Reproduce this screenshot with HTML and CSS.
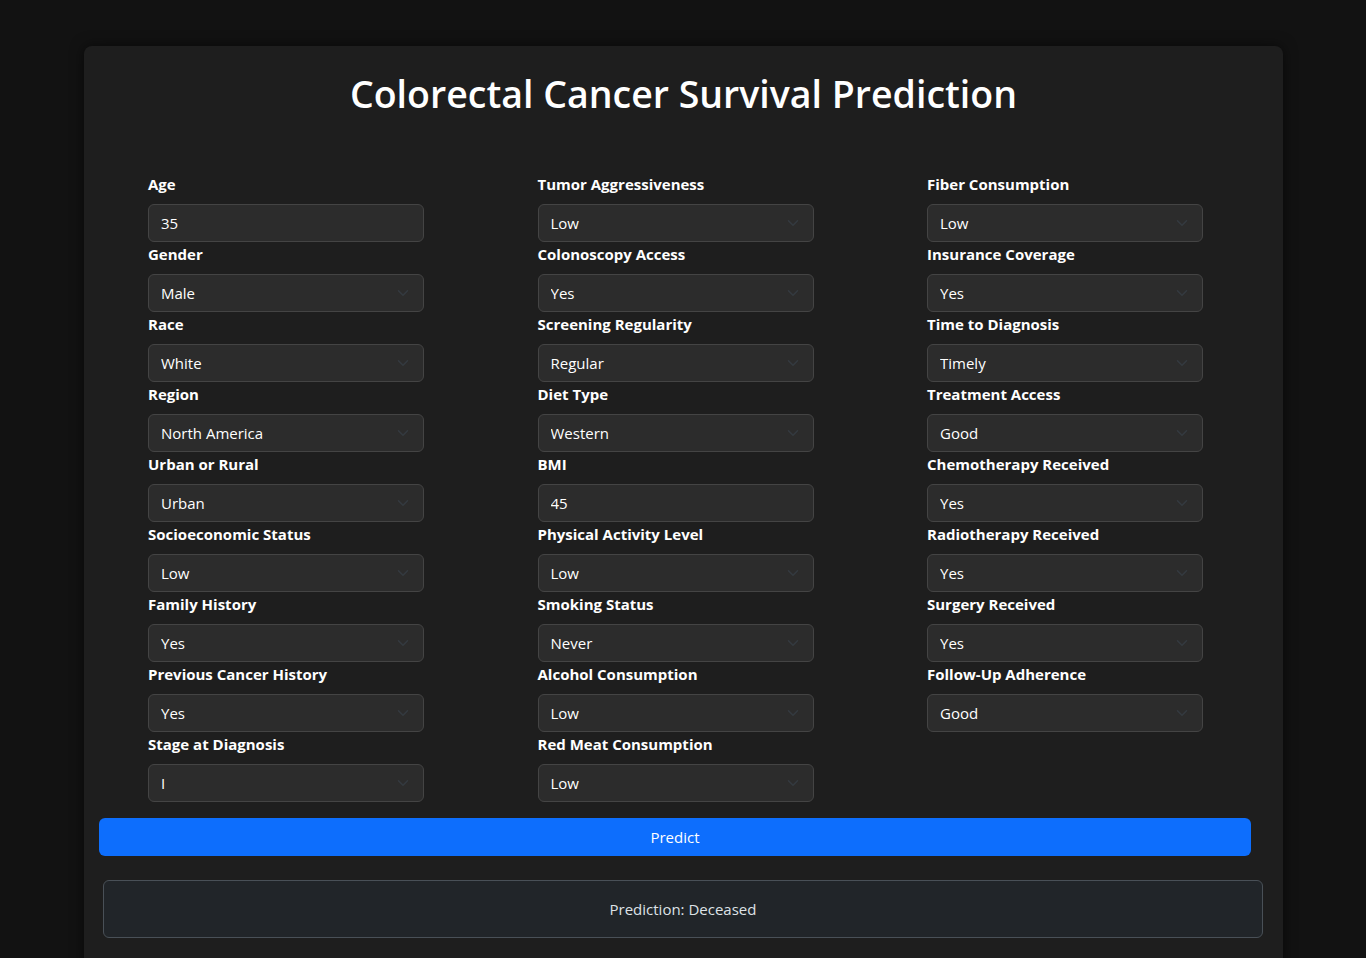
FILE: index.html
```html
<!DOCTYPE html>
<html lang="en">
<head>
<meta charset="utf-8">
<title>Colorectal Cancer Survival Prediction</title>
<link rel="stylesheet" href="styles.css">
</head>
<body>
<div class="card">
  <h1 class="title">Colorectal Cancer Survival Prediction</h1>
  <form class="form">
    <div class="grid">
      <div class="col">
        <div class="group"><label class="label">Age</label><input class="control" type="text" value="35"></div>
        <div class="group"><label class="label">Gender</label><div class="sel"><select class="control"><option>Male</option></select><svg class="chev" viewBox="0 0 16 16"><path d="m2 5 6 6 6-6"/></svg></div></div>
        <div class="group"><label class="label">Race</label><div class="sel"><select class="control"><option>White</option></select><svg class="chev" viewBox="0 0 16 16"><path d="m2 5 6 6 6-6"/></svg></div></div>
        <div class="group"><label class="label">Region</label><div class="sel"><select class="control"><option>North America</option></select><svg class="chev" viewBox="0 0 16 16"><path d="m2 5 6 6 6-6"/></svg></div></div>
        <div class="group"><label class="label">Urban or Rural</label><div class="sel"><select class="control"><option>Urban</option></select><svg class="chev" viewBox="0 0 16 16"><path d="m2 5 6 6 6-6"/></svg></div></div>
        <div class="group"><label class="label">Socioeconomic Status</label><div class="sel"><select class="control"><option>Low</option></select><svg class="chev" viewBox="0 0 16 16"><path d="m2 5 6 6 6-6"/></svg></div></div>
        <div class="group"><label class="label">Family History</label><div class="sel"><select class="control"><option>Yes</option></select><svg class="chev" viewBox="0 0 16 16"><path d="m2 5 6 6 6-6"/></svg></div></div>
        <div class="group"><label class="label">Previous Cancer History</label><div class="sel"><select class="control"><option>Yes</option></select><svg class="chev" viewBox="0 0 16 16"><path d="m2 5 6 6 6-6"/></svg></div></div>
        <div class="group"><label class="label">Stage at Diagnosis</label><div class="sel"><select class="control"><option>I</option></select><svg class="chev" viewBox="0 0 16 16"><path d="m2 5 6 6 6-6"/></svg></div></div>
      </div>
      <div class="col">
        <div class="group"><label class="label">Tumor Aggressiveness</label><div class="sel"><select class="control"><option>Low</option></select><svg class="chev" viewBox="0 0 16 16"><path d="m2 5 6 6 6-6"/></svg></div></div>
        <div class="group"><label class="label">Colonoscopy Access</label><div class="sel"><select class="control"><option>Yes</option></select><svg class="chev" viewBox="0 0 16 16"><path d="m2 5 6 6 6-6"/></svg></div></div>
        <div class="group"><label class="label">Screening Regularity</label><div class="sel"><select class="control"><option>Regular</option></select><svg class="chev" viewBox="0 0 16 16"><path d="m2 5 6 6 6-6"/></svg></div></div>
        <div class="group"><label class="label">Diet Type</label><div class="sel"><select class="control"><option>Western</option></select><svg class="chev" viewBox="0 0 16 16"><path d="m2 5 6 6 6-6"/></svg></div></div>
        <div class="group"><label class="label">BMI</label><input class="control" type="text" value="45"></div>
        <div class="group"><label class="label">Physical Activity Level</label><div class="sel"><select class="control"><option>Low</option></select><svg class="chev" viewBox="0 0 16 16"><path d="m2 5 6 6 6-6"/></svg></div></div>
        <div class="group"><label class="label">Smoking Status</label><div class="sel"><select class="control"><option>Never</option></select><svg class="chev" viewBox="0 0 16 16"><path d="m2 5 6 6 6-6"/></svg></div></div>
        <div class="group"><label class="label">Alcohol Consumption</label><div class="sel"><select class="control"><option>Low</option></select><svg class="chev" viewBox="0 0 16 16"><path d="m2 5 6 6 6-6"/></svg></div></div>
        <div class="group"><label class="label">Red Meat Consumption</label><div class="sel"><select class="control"><option>Low</option></select><svg class="chev" viewBox="0 0 16 16"><path d="m2 5 6 6 6-6"/></svg></div></div>
      </div>
      <div class="col">
        <div class="group"><label class="label">Fiber Consumption</label><div class="sel"><select class="control"><option>Low</option></select><svg class="chev" viewBox="0 0 16 16"><path d="m2 5 6 6 6-6"/></svg></div></div>
        <div class="group"><label class="label">Insurance Coverage</label><div class="sel"><select class="control"><option>Yes</option></select><svg class="chev" viewBox="0 0 16 16"><path d="m2 5 6 6 6-6"/></svg></div></div>
        <div class="group"><label class="label">Time to Diagnosis</label><div class="sel"><select class="control"><option>Timely</option></select><svg class="chev" viewBox="0 0 16 16"><path d="m2 5 6 6 6-6"/></svg></div></div>
        <div class="group"><label class="label">Treatment Access</label><div class="sel"><select class="control"><option>Good</option></select><svg class="chev" viewBox="0 0 16 16"><path d="m2 5 6 6 6-6"/></svg></div></div>
        <div class="group"><label class="label">Chemotherapy Received</label><div class="sel"><select class="control"><option>Yes</option></select><svg class="chev" viewBox="0 0 16 16"><path d="m2 5 6 6 6-6"/></svg></div></div>
        <div class="group"><label class="label">Radiotherapy Received</label><div class="sel"><select class="control"><option>Yes</option></select><svg class="chev" viewBox="0 0 16 16"><path d="m2 5 6 6 6-6"/></svg></div></div>
        <div class="group"><label class="label">Surgery Received</label><div class="sel"><select class="control"><option>Yes</option></select><svg class="chev" viewBox="0 0 16 16"><path d="m2 5 6 6 6-6"/></svg></div></div>
        <div class="group"><label class="label">Follow-Up Adherence</label><div class="sel"><select class="control"><option>Good</option></select><svg class="chev" viewBox="0 0 16 16"><path d="m2 5 6 6 6-6"/></svg></div></div>
      </div>
    </div>
    <button class="btn" type="button">Predict</button>
  </form>
  <div class="result">Prediction: Deceased</div>
</div>
</body>
</html>
```

FILE: styles.css
```css
* { box-sizing: border-box; }
html, body { margin: 0; padding: 0; }
body {
  background: #121212;
  color: #fff;
  font-family: "Open Sans", "Noto Sans", sans-serif;
  font-size: 15px;
  line-height: 1.5;
  height: 958px;
  overflow: hidden;
}
.card {
  width: 1199px;
  margin: 46px 0 0 84px;
  background: #1e1e1e;
  border-radius: 8px;
  box-shadow: 0 0 14px rgba(0, 0, 0, 0.55);
  padding: 24px 0 30px;
}
.title {
  margin: 0;
  text-align: center;
  font-size: 37.5px;
  font-weight: 600;
  line-height: 48px;
  color: #fff;
}
.form { margin-top: 54px; }
.grid {
  display: grid;
  grid-template-columns: repeat(3, 276px);
  column-gap: 113.5px;
  margin-left: 64px;
}
.group { display: flex; flex-direction: column; }
.label {
  font-weight: 700;
  font-size: 15px;
  line-height: 24px;
  margin-bottom: 8px;
  color: #fff;
}
.sel { position: relative; }
.control {
  display: block;
  width: 276px;
  height: 38px;
  padding: 6px 36px 6px 12px;
  font-family: inherit;
  font-size: 15px;
  line-height: 24px;
  color: #fff;
  background: #2c2c2c;
  border: 1px solid #444;
  border-radius: 6px;
  appearance: none;
  -webkit-appearance: none;
  outline: none;
}
.chev {
  position: absolute;
  right: 13px;
  top: 13px;
  width: 16px;
  height: 12px;
  fill: none;
  stroke: #343a40;
  stroke-width: 2;
  stroke-linecap: round;
  stroke-linejoin: round;
  pointer-events: none;
}
.btn {
  display: block;
  margin: 16px 0 0 15px;
  width: 1152px;
  height: 38px;
  background: #0d6efd;
  color: #fff;
  border: none;
  border-radius: 6px;
  font-family: inherit;
  font-size: 15px;
  line-height: 24px;
}
.result {
  margin: 24px 0 0 19px;
  width: 1160px;
  height: 58px;
  background: #212529;
  border: 1px solid #495057;
  border-radius: 6px;
  color: #dee2e6;
  font-size: 15px;
  display: flex;
  align-items: center;
  justify-content: center;
}
```
